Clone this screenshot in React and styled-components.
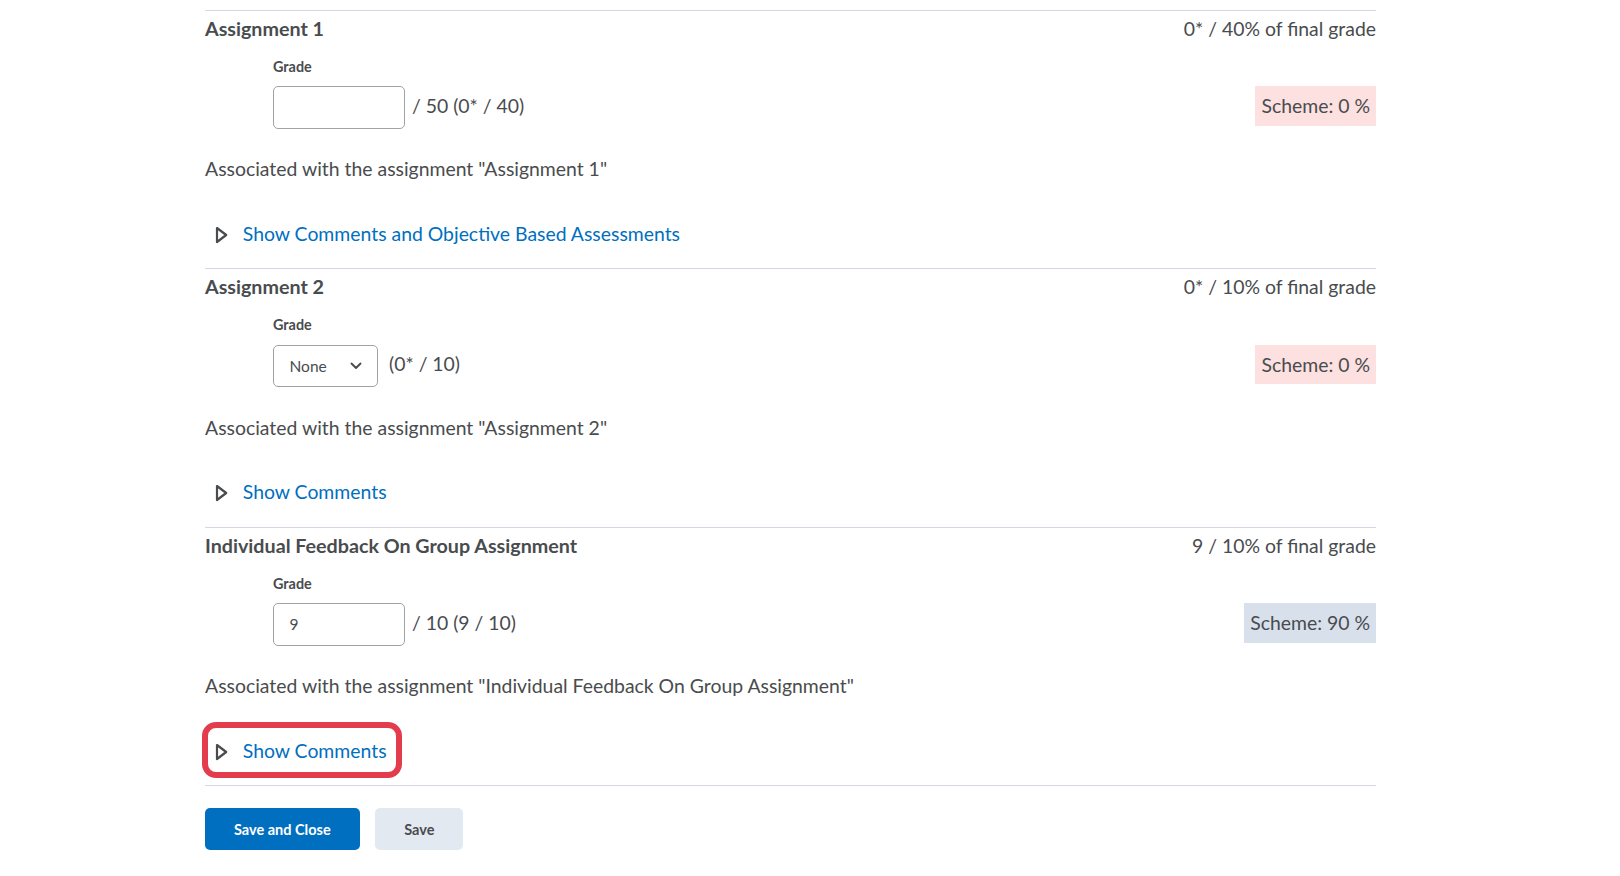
import styled, { createGlobalStyle } from "styled-components";

const GlobalStyle = createGlobalStyle`
  html, body {
    margin: 0;
    padding: 0;
    background: #ffffff;
  }
  body {
    font-family: Lato, "Liberation Sans", sans-serif;
    color: #494c4e;
  }
`;

const Page = styled.div`
  width: 1171px;
  padding: 10px 0 40px 205px;
`;

const Section = styled.section`
  border-top: 1px solid #d3d9e0;
  padding: 3px 0 13.1px;
  display: flex;
  flex-direction: column;
`;

const Header = styled.div`
  display: flex;
  justify-content: space-between;
  align-items: center;
  height: 29px;
`;

const Title = styled.h2`
  margin: 0;
  font-size: 19.7px;
  font-weight: 700;
`;

const Weight = styled.span`
  font-size: 19.4px;
`;

const Label = styled.div`
  margin: 14px 0 0 68px;
  height: 20.7px;
  line-height: 20.7px;
  font-size: 14.4px;
  font-weight: 700;
`;

const GradeRow = styled.div`
  margin-top: 8.6px;
  padding-left: 68px;
  height: 42.4px;
  display: flex;
  align-items: center;
`;

const Input = styled.div`
  box-sizing: border-box;
  width: 132px;
  height: 42.4px;
  border: 1px solid #9ea3a7;
  border-radius: 5px;
  padding: 0 15.5px;
  display: flex;
  align-items: center;
  font-size: 15.5px;
`;

const Select = styled.div`
  box-sizing: border-box;
  width: 104.5px;
  height: 42.4px;
  border: 1px solid #9ea3a7;
  border-radius: 5px;
  padding: 0 14.5px 0 15.5px;
  display: flex;
  align-items: center;
  justify-content: space-between;
  font-size: 15.5px;
`;

const Points = styled.span`
  margin-left: ${(p) => p.$gap || 7}px;
  margin-bottom: 4px;
  font-size: 19.4px;
`;

const Scheme = styled.div`
  margin-left: auto;
  margin-top: -3px;
  height: 39.3px;
  padding: 0 6px;
  display: flex;
  align-items: center;
  font-size: 19.4px;
  background: ${(p) => (p.$good ? "#d8e0ec" : "#fde0e0")};
`;

const Note = styled.p`
  margin: 25.6px 0 0;
  line-height: 29px;
  font-size: 19.4px;
`;

const Toggle = styled.button`
  align-self: flex-start;
  margin: 27.6px 0 0 3px;
  height: 44.5px;
  padding: 0 9.5px 0 7.3px;
  display: inline-flex;
  align-items: center;
  gap: 14.5px;
  border: none;
  background: none;
  border-radius: 8px;
  font-family: inherit;
  font-size: 19.4px;
  color: #006fbf;
  cursor: pointer;
  outline: ${(p) => (p.$marked ? "6.5px solid #e33d4d" : "none")};

  svg {
    margin-top: 3px;
  }
`;

const Footer = styled.div`
  border-top: 1px solid #d3d9e0;
  padding-top: 22px;
  display: flex;
  gap: 15.5px;
`;

const Button = styled.button`
  height: 42px;
  padding: 0 29px;
  border: none;
  border-radius: 5px;
  font-family: inherit;
  font-size: 14.5px;
  font-weight: 700;
  background: ${(p) => (p.$primary ? "#006fbf" : "#e3e9f1")};
  color: ${(p) => (p.$primary ? "#ffffff" : "#494c4e")};
`;

const Caret = () => (
  <svg width="13" height="18" viewBox="0 0 13 18">
    <path d="M2 2 L11.2 9 L2 16 Z" fill="none" stroke="#494c4e" strokeWidth="2.2" strokeLinejoin="round" />
  </svg>
);

const Chevron = () => (
  <svg width="12" height="8" viewBox="0 0 12 8">
    <path d="M1.5 1.5 L6 6 L10.5 1.5" fill="none" stroke="#494c4e" strokeWidth="1.9" strokeLinecap="round" strokeLinejoin="round" />
  </svg>
);

const items = [
  {
    title: "Assignment 1",
    weight: "0* / 40% of final grade",
    kind: "input",
    value: "",
    points: "/ 50 (0* / 40)",
    scheme: "Scheme: 0 %",
    link: "Show Comments and Objective Based Assessments",
  },
  {
    title: "Assignment 2",
    weight: "0* / 10% of final grade",
    kind: "select",
    points: "(0* / 10)",
    scheme: "Scheme: 0 %",
    link: "Show Comments",
  },
  {
    title: "Individual Feedback On Group Assignment",
    weight: "9 / 10% of final grade",
    kind: "input",
    value: "9",
    points: "/ 10 (9 / 10)",
    scheme: "Scheme: 90 %",
    good: true,
    link: "Show Comments",
    marked: true,
  },
];

export default function App() {
  return (
    <>
      <GlobalStyle />
      <Page>
        {items.map((item) => (
          <Section key={item.title}>
            <Header>
              <Title>{item.title}</Title>
              <Weight>{item.weight}</Weight>
            </Header>
            <Label>Grade</Label>
            <GradeRow>
              {item.kind === "select" ? (
                <Select>
                  None
                  <Chevron />
                </Select>
              ) : (
                <Input>{item.value}</Input>
              )}
              <Points $gap={item.kind === "select" ? 11.5 : 7}>{item.points}</Points>
              <Scheme $good={item.good}>{item.scheme}</Scheme>
            </GradeRow>
            <Note>Associated with the assignment "{item.title}"</Note>
            <Toggle $marked={item.marked}>
              <Caret />
              {item.link}
            </Toggle>
          </Section>
        ))}
        <Footer>
          <Button $primary>Save and Close</Button>
          <Button>Save</Button>
        </Footer>
      </Page>
    </>
  );
}
